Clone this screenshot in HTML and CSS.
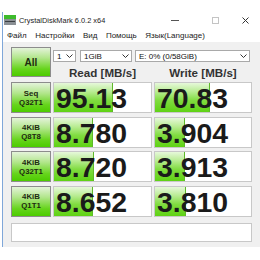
FILE: index.html
```html
<!DOCTYPE HTML>
<html lang="ru">
<head>
	<meta charset="UTF-8" />
	<title>CrystalDiskMark 6.0.2 x64</title>
	<link rel="stylesheet" href="styles.css">
</head>
<body>
	<div class="window">
		<div class="titlebar">
			<svg class="appicon" width="12" height="10" viewBox="0 0 12 10">
				<rect x="0" y="0" width="12" height="4" fill="#3dbb2c"/>
				<rect x="0" y="4" width="12" height="6" fill="#8a8f94"/>
				<rect x="1" y="6" width="10" height="1" fill="#3a3e42"/>
			</svg>
			<span class="title">CrystalDiskMark 6.0.2 x64</span>
			<svg class="ctl cmin" width="8" height="8" viewBox="0 0 8 8"><line x1="0" y1="4.5" x2="8" y2="4.5" stroke="#555" stroke-width="1"/></svg>
			<svg class="ctl cmax" width="7" height="7" viewBox="0 0 7 7"><rect x="0.5" y="0.5" width="6" height="6" fill="none" stroke="#c4c4c4" stroke-width="1"/></svg>
			<svg class="ctl cclose" width="7" height="7" viewBox="0 0 7 7"><path d="M0.5 0.5 L6.5 6.5 M6.5 0.5 L0.5 6.5" stroke="#333" stroke-width="1"/></svg>
		</div>
		<div class="menubar">
			<span>Файл</span>
			<span>Настройки</span>
			<span>Вид</span>
			<span>Помощь</span>
			<span>Язык(Language)</span>
		</div>
		<div class="content">
			<div class="top">
				<div class="btn all">All</div>
				<div class="topright">
					<div class="selects">
						<div class="sel s1"><span>1</span><svg width="7" height="5" viewBox="0 0 7 5"><path d="M0.5 0.5 L3.5 3.5 L6.5 0.5" fill="none" stroke="#333" stroke-width="1"/></svg></div>
						<div class="sel s2"><span>1GiB</span><svg width="7" height="5" viewBox="0 0 7 5"><path d="M0.5 0.5 L3.5 3.5 L6.5 0.5" fill="none" stroke="#333" stroke-width="1"/></svg></div>
						<div class="sel s3"><span>E: 0% (0/58GiB)</span><svg width="7" height="5" viewBox="0 0 7 5"><path d="M0.5 0.5 L3.5 3.5 L6.5 0.5" fill="none" stroke="#333" stroke-width="1"/></svg></div>
					</div>
					<div class="heads">
						<div>Read [MB/s]</div>
						<div>Write [MB/s]</div>
					</div>
				</div>
			</div>
			<div class="rows">
				<div class="btn label">Seq<br>Q32T1</div>
				<div class="cell"><div class="bar" style="width:58px"></div><span class="val">95.13</span></div>
				<div class="cell"><div class="bar" style="width:54px"></div><span class="val">70.83</span></div>

				<div class="btn label">4KiB<br>Q8T8</div>
				<div class="cell"><div class="bar" style="width:38px"></div><span class="val">8.780</span></div>
				<div class="cell"><div class="bar" style="width:29px"></div><span class="val">3.904</span></div>

				<div class="btn label">4KiB<br>Q32T1</div>
				<div class="cell"><div class="bar" style="width:39px"></div><span class="val">8.720</span></div>
				<div class="cell"><div class="bar" style="width:29px"></div><span class="val">3.913</span></div>

				<div class="btn label">4KiB<br>Q1T1</div>
				<div class="cell"><div class="bar" style="width:38px"></div><span class="val">8.652</span></div>
				<div class="cell"><div class="bar" style="width:30px"></div><span class="val">3.810</span></div>
			</div>
			<div class="comment"></div>
		</div>
	</div>
</body>
</html>
```

FILE: styles.css
```css
body {
	margin: 0;
	background: #fff;
	font-family: "Liberation Sans", Arial, sans-serif;
	color: #222;
}

.window {
	margin: 12px 0 0 2px;
	width: 257px;
	border-left: 1px solid #7fa7d9;
}

/* title bar */
.titlebar {
	height: 16px;
	display: flex;
	align-items: center;
	background: #fff;
	padding-right: 11px;
}
.appicon {
	margin-left: 1px;
}
.title {
	flex: 1;
	margin-left: 3px;
	font-size: 7.4px;
	color: #222;
}
.cmin  { margin-right: 33px; }
.cmax  { margin-right: 23px; }

/* menu */
.menubar {
	height: 14px;
	display: flex;
	align-items: center;
	gap: 8.5px;
	padding-left: 4px;
	background: #fff;
	font-size: 8px;
	color: #222;
}

/* main area */
.content {
	background: #f0f0f0;
	padding: 5px 0 5px 8px;
}
.top {
	display: flex;
	gap: 2px;
	height: 30px;
}
.topright {
	display: flex;
	flex-direction: column;
}
.selects {
	margin-top: 3px;
	height: 12px;
	display: flex;
}
.sel {
	box-sizing: border-box;
	height: 12px;
	display: flex;
	align-items: center;
	justify-content: space-between;
	padding: 0 2px 0 3px;
	background: #fff;
	border: 1px solid #a9a9a9;
	font-size: 8px;
	color: #111;
}
.s1 { width: 23px; }
.s2 { width: 52px; margin-left: 4px; }
.s3 { width: 115px; margin-left: 3px; }

.heads {
	display: grid;
	grid-template-columns: 99px 98px;
	column-gap: 2px;
	padding-top: 4px;
}
.heads div {
	text-align: center;
	font-weight: bold;
	font-size: 11.6px;
	color: #333;
}

.btn {
	box-sizing: border-box;
	width: 40px;
	border: 1px solid #8c8c8c;
	background: linear-gradient(to bottom, #e4f3da 0%, #b2e68c 35%, #66d41c 75%, #4ccc00 100%);
	color: #1d2a10;
	font-weight: bold;
	display: flex;
	flex-direction: column;
	align-items: center;
	justify-content: center;
	text-align: center;
}
.all {
	height: 30px;
	font-size: 10px;
}
.label {
	font-size: 7.8px;
	line-height: 9px;
}

.rows {
	margin-top: 5px;
	display: grid;
	grid-template-columns: 40px 99px 98px;
	grid-auto-rows: 31px;
	column-gap: 2px;
	row-gap: 3.5px;
}
.cell {
	position: relative;
	box-sizing: border-box;
	border: 1px solid #c8c8c8;
	background: #fff;
	overflow: hidden;
}
.bar {
	position: absolute;
	left: 0;
	top: 0;
	bottom: 0;
	background: linear-gradient(to bottom, #e6f8da 0%, #b8ec92 30%, #80dc40 60%, #5fd214 100%);
	border-right: 1px solid #5fb82a;
}
.val {
	position: relative;
	display: block;
	padding-left: 2px;
	font-weight: bold;
	font-size: 28.4px;
	line-height: 30px;
	color: #1a1a1a;
}

.comment {
	margin-top: 6.5px;
	box-sizing: border-box;
	width: 241px;
	height: 19px;
	background: #fff;
	border: 1px solid #c8c8c8;
}
```
